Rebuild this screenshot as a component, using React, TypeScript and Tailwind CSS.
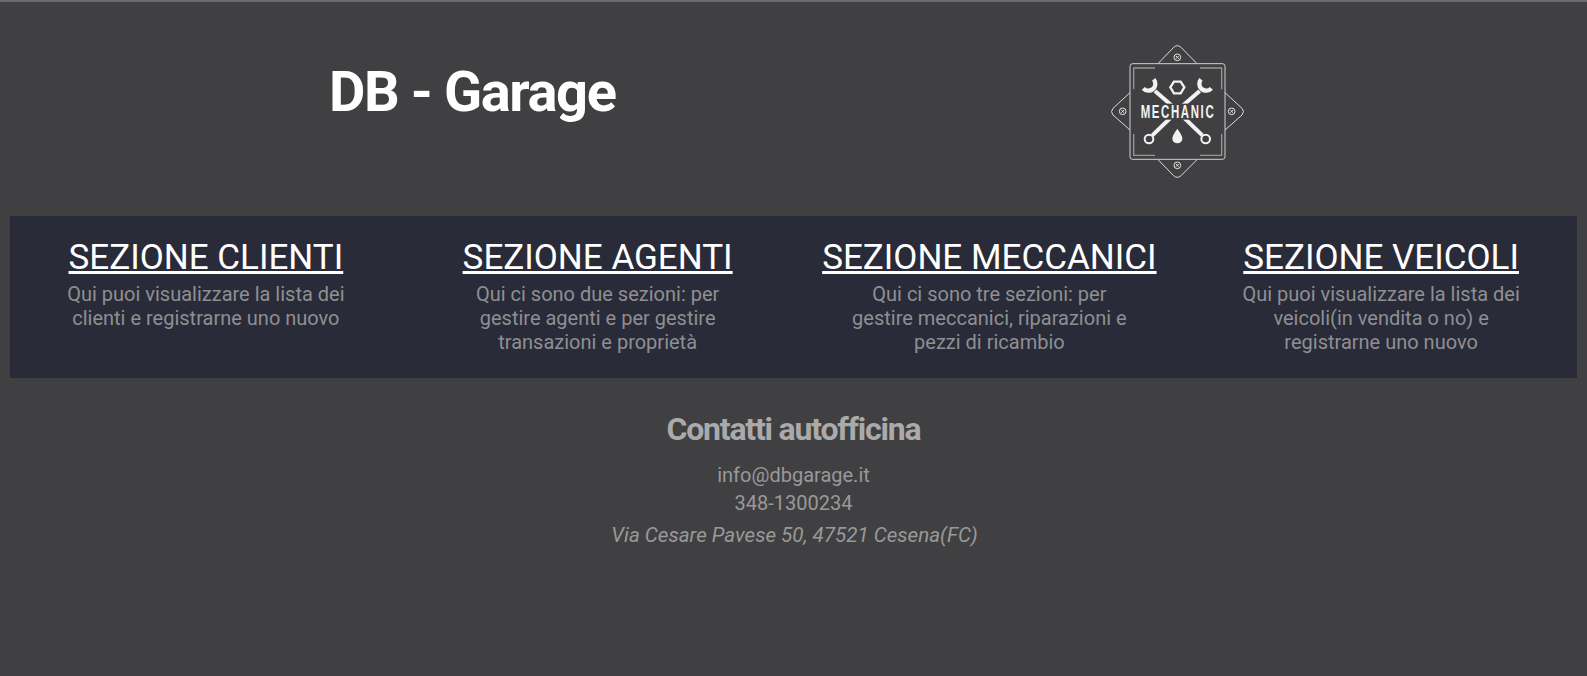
const sections = [
  { title: 'SEZIONE CLIENTI', text: 'Qui puoi visualizzare la lista dei clienti e registrarne uno nuovo' },
  { title: 'SEZIONE AGENTI', text: 'Qui ci sono due sezioni: per gestire agenti e per gestire transazioni e proprietà' },
  { title: 'SEZIONE MECCANICI', text: 'Qui ci sono tre sezioni: per gestire meccanici, riparazioni e pezzi di ricambio' },
  { title: 'SEZIONE VEICOLI', text: 'Qui puoi visualizzare la lista dei veicoli(in vendita o no) e registrarne uno nuovo' },
];

const Screw = ({ x, y }: { x: number; y: number }) => (
  <g>
    <circle cx={x} cy={y} r="10" fill="none" stroke="#e6e6e6" strokeWidth="3" />
    <path d={`M${x - 4} ${y - 4}L${x + 4} ${y + 4}M${x + 4} ${y - 4}L${x - 4} ${y + 4}`} stroke="#e6e6e6" strokeWidth="3" />
  </g>
);

const Logo = () => (
  <svg viewBox="0 0 540 510" className="w-[180px] h-[170px]" fill="none">
    <rect x="123" y="101" width="285" height="287" rx="8" stroke="#cfcfcf" strokeWidth="3" />
    <path d="M208 100L254 52Q265 42 276 52L323 100" stroke="#dcdcdc" strokeWidth="3" />
    <path d="M408 188L459 235Q468 245 459 255L408 300" stroke="#dcdcdc" strokeWidth="3" />
    <path d="M208 390L254 437Q265 447 276 437L323 390" stroke="#dcdcdc" strokeWidth="3" />
    <path d="M123 188L72 235Q63 245 72 255L123 300" stroke="#dcdcdc" strokeWidth="3" />
    <path d="M198 114H134V178M333 114H398V178M134 312V376H198M398 312V376H333" stroke="#969696" strokeWidth="4" />
    <Screw x={265} y={82} />
    <Screw x={101} y={244} />
    <Screw x={428} y={244} />
    <Screw x={265} y={406} />
    <path d="M255 155H275L286 172L275 190H255L244 172Z" stroke="#f2f2f2" strokeWidth="7" />
    <path d="M265 296Q281 318 280 326A15 14 0 0 1 250 326Q249 318 265 296Z" fill="#f2f2f2" />
    {/* wrenches: open jaw on top, ring at the bottom, crossing behind the word */}
    <path d="M194 148A20 20 0 1 1 163 175" stroke="#f2f2f2" strokeWidth="13" />
    <path d="M336 148A20 20 0 1 0 367 175" stroke="#f2f2f2" strokeWidth="13" />
    <path d="M198 183L250 228" stroke="#f2f2f2" strokeWidth="12" />
    <path d="M332 183L280 228" stroke="#f2f2f2" strokeWidth="12" />
    <path d="M190 316L244 264" stroke="#f2f2f2" strokeWidth="12" />
    <path d="M340 316L286 264" stroke="#f2f2f2" strokeWidth="12" />
    <circle cx="180" cy="327" r="13" fill="#404042" stroke="#f2f2f2" strokeWidth="6" />
    <circle cx="350" cy="327" r="13" fill="#404042" stroke="#f2f2f2" strokeWidth="6" />
    <rect x="150" y="221" width="232" height="48" fill="#404042" />
    <text
      x="155"
      y="265"
      textLength="224"
      lengthAdjust="spacingAndGlyphs"
      fill="#f2f2f2"
      fontSize="56"
      fontWeight="700"
      letterSpacing="8"
      fontFamily="'Liberation Sans', sans-serif"
    >
      MECHANIC
    </text>
  </svg>
);

export default function App() {
  return (
    <div className="min-h-[676px] bg-[#404042] border-t-2 border-[#6b6b6d] font-['Roboto',sans-serif] overflow-hidden">
      <header className="grid grid-cols-2 h-[214px] pl-[119px] pr-[55px] pb-[8px]">
        <div className="flex items-center justify-center">
          <h1 className="text-[56px] font-bold text-white tracking-[-1.4px] mb-[26px]">DB - Garage</h1>
        </div>
        <div className="flex items-center justify-center">
          <div className="mt-[19px]">
            <Logo />
          </div>
        </div>
      </header>

      <section className="mx-[10px] h-[162px] bg-[#2a2b38] grid grid-cols-4 pt-[18px]">
        {sections.map((s) => (
          <div key={s.title} className="flex flex-col items-center text-center">
            <a href="#" className="text-[35px] leading-[48px] text-white underline">
              {s.title}
            </a>
            <p className="w-[285px] text-[20px] leading-[24px] text-[#8f8f93]">{s.text}</p>
          </div>
        ))}
      </section>

      <footer className="flex flex-col items-center text-[20px] text-[#999999] pt-[31px]">
        <h2 className="text-[32px] leading-[40px] font-bold text-[#aaaaaa] tracking-[-1.2px] mb-[12px]">Contatti autofficina</h2>
        <p className="leading-[28px]">info@dbgarage.it</p>
        <p className="leading-[28px]">348-1300234</p>
        <p className="leading-[36px] italic text-[20.6px] pl-[2px]">Via Cesare Pavese 50, 47521 Cesena(FC)</p>
      </footer>
    </div>
  );
}
